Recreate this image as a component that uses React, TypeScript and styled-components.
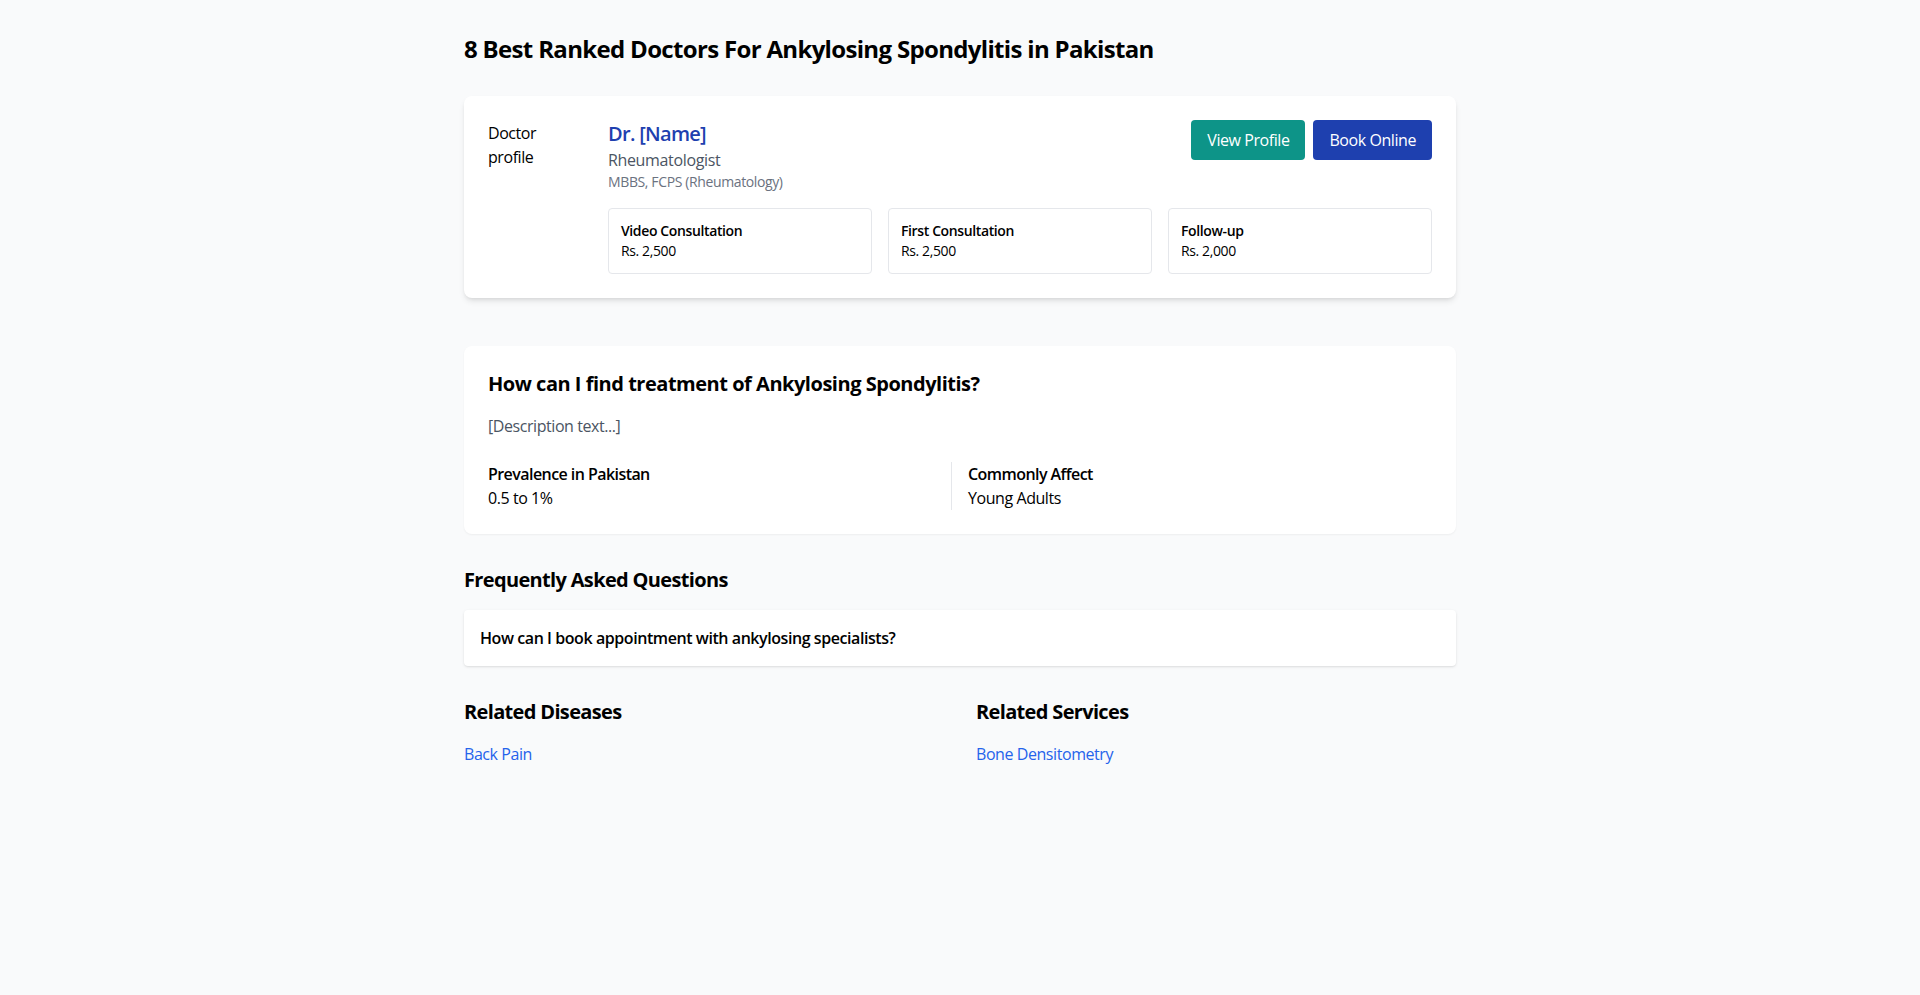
import React from "react";
import styled, { createGlobalStyle } from "styled-components";

const GlobalStyle = createGlobalStyle`
  * { box-sizing: border-box; letter-spacing: -0.027em; }
  html, body { margin: 0; padding: 0; }
  body {
    background: #f9fafb;
    font-family: "Open Sans", "Noto Sans", "Liberation Sans", sans-serif;
    color: #000;
  }
`;

const Page = styled.main`
  max-width: 1024px;
  margin: 0 auto;
  padding: 33px 16px 32px;
`;

const Title = styled.h1`
  margin: 0 0 31px;
  font-size: 24px;
  line-height: 32px;
  font-weight: 700;
  letter-spacing: -0.028em;
`;

const Card = styled.section<{ $shadow?: "md" | "sm" }>`
  background: #fff;
  border-radius: 8px;
  padding: 24px;
  box-shadow: ${(p) =>
    p.$shadow === "md"
      ? "0 4px 6px -1px rgba(0,0,0,0.1), 0 2px 4px -2px rgba(0,0,0,0.1)"
      : "0 1px 2px 0 rgba(0,0,0,0.05)"};
`;

const DoctorRow = styled.div`
  display: flex;
  gap: 24px;
`;

const SideLabel = styled.div`
  width: 96px;
  flex-shrink: 0;
  padding-top: 1px;
  font-size: 16px;
  line-height: 24px;
`;

const DoctorBody = styled.div`
  flex: 1;
  min-width: 0;
`;

const DoctorHead = styled.div`
  display: flex;
  justify-content: space-between;
  align-items: flex-start;
`;

const DoctorName = styled.div`
  font-size: 20px;
  line-height: 28px;
  font-weight: 600;
  color: #1e40af;
  letter-spacing: -0.035em;
`;

const Specialty = styled.div`
  font-size: 16px;
  line-height: 24px;
  color: #4b5563;
  letter-spacing: -0.022em;
`;

const Degrees = styled.div`
  font-size: 14px;
  line-height: 20px;
  color: #6b7280;
`;

const Actions = styled.div`
  display: flex;
  gap: 8px;
`;

const Button = styled.button<{ $variant: "teal" | "blue" }>`
  height: 40px;
  padding: 0 16px;
  border: none;
  border-radius: 4px;
  font-family: inherit;
  font-size: 16px;
  color: #fff;
  cursor: pointer;
  background: ${(p) => (p.$variant === "teal" ? "#0d9488" : "#1e40af")};
`;

const FeeGrid = styled.div`
  display: grid;
  grid-template-columns: repeat(3, 1fr);
  gap: 16px;
  margin-top: 16px;
`;

const FeeBox = styled.div`
  border: 1px solid #e5e7eb;
  border-radius: 4px;
  padding: 12px;
  font-size: 14px;
  line-height: 20px;
`;

const FeeLabel = styled.div`
  font-weight: 600;
`;

const InfoCard = styled(Card)`
  margin-top: 48px;
`;

const SectionHeading = styled.h2<{ $loose?: boolean }>`
  margin: 0 0 16px;
  font-size: 20px;
  line-height: 28px;
  font-weight: 700;
  letter-spacing: ${(p) => (p.$loose ? "-0.024em" : "-0.033em")};
`;

const Description = styled.p`
  margin: 0 0 24px;
  font-size: 16px;
  line-height: 24px;
  color: #4b5563;
`;

const StatGrid = styled.div`
  display: grid;
  grid-template-columns: 1fr 1fr;
  gap: 16px;
`;

const Stat = styled.div<{ $divider?: boolean }>`
  border-right: ${(p) => (p.$divider ? "1px solid #e5e7eb" : "none")};
`;

const StatLabel = styled.div`
  font-size: 16px;
  line-height: 24px;
  font-weight: 600;
  letter-spacing: -0.035em;
`;

const StatValue = styled.div`
  font-size: 16px;
  line-height: 24px;
`;

const Section = styled.section`
  margin-top: 32px;
`;

const FaqItem = styled.div`
  background: #fff;
  border-radius: 4px;
  padding: 16px;
  font-size: 16px;
  line-height: 24px;
  font-weight: 600;
  box-shadow: 0 1px 3px 0 rgba(0,0,0,0.1), 0 1px 2px -1px rgba(0,0,0,0.1);
`;

const RelatedGrid = styled.div`
  display: grid;
  grid-template-columns: 1fr 1fr;
  gap: 32px;
  margin-top: 32px;
`;

const LinkList = styled.ul`
  list-style: none;
  margin: 0;
  padding: 0;
`;

const RelatedLink = styled.a`
  font-size: 16px;
  line-height: 24px;
  color: #2563eb;
  text-decoration: none;
`;

export default function App() {
  return (
    <>
      <GlobalStyle />
      <Page>
        <Title>8 Best Ranked Doctors For Ankylosing Spondylitis in Pakistan</Title>

        <Card $shadow="md">
          <DoctorRow>
            <SideLabel>Doctor profile</SideLabel>
            <DoctorBody>
              <DoctorHead>
                <div>
                  <DoctorName>Dr. [Name]</DoctorName>
                  <Specialty>Rheumatologist</Specialty>
                  <Degrees>MBBS, FCPS (Rheumatology)</Degrees>
                </div>
                <Actions>
                  <Button $variant="teal">View Profile</Button>
                  <Button $variant="blue">Book Online</Button>
                </Actions>
              </DoctorHead>
              <FeeGrid>
                <FeeBox>
                  <FeeLabel>Video Consultation</FeeLabel>
                  <div>Rs. 2,500</div>
                </FeeBox>
                <FeeBox>
                  <FeeLabel>First Consultation</FeeLabel>
                  <div>Rs. 2,500</div>
                </FeeBox>
                <FeeBox>
                  <FeeLabel>Follow-up</FeeLabel>
                  <div>Rs. 2,000</div>
                </FeeBox>
              </FeeGrid>
            </DoctorBody>
          </DoctorRow>
        </Card>

        <InfoCard $shadow="sm">
          <SectionHeading $loose>How can I find treatment of Ankylosing Spondylitis?</SectionHeading>
          <Description>[Description text...]</Description>
          <StatGrid>
            <Stat $divider>
              <StatLabel>Prevalence in Pakistan</StatLabel>
              <StatValue>0.5 to 1%</StatValue>
            </Stat>
            <Stat>
              <StatLabel>Commonly Affect</StatLabel>
              <StatValue>Young Adults</StatValue>
            </Stat>
          </StatGrid>
        </InfoCard>

        <Section>
          <SectionHeading>Frequently Asked Questions</SectionHeading>
          <FaqItem>How can I book appointment with ankylosing specialists?</FaqItem>
        </Section>

        <RelatedGrid>
          <div>
            <SectionHeading>Related Diseases</SectionHeading>
            <LinkList>
              <li><RelatedLink href="#">Back Pain</RelatedLink></li>
            </LinkList>
          </div>
          <div>
            <SectionHeading>Related Services</SectionHeading>
            <LinkList>
              <li><RelatedLink href="#">Bone Densitometry</RelatedLink></li>
            </LinkList>
          </div>
        </RelatedGrid>
      </Page>
    </>
  );
}
